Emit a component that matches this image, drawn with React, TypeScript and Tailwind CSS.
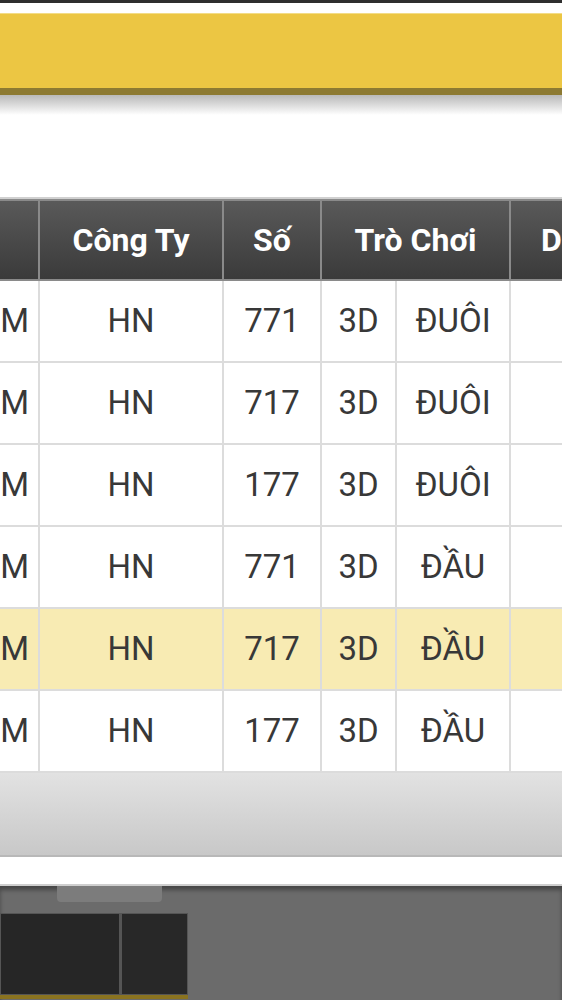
import React from 'react'

const rows = [
  { so: '771', kieu: 'ĐUÔI', hl: false },
  { so: '717', kieu: 'ĐUÔI', hl: false },
  { so: '177', kieu: 'ĐUÔI', hl: false },
  { so: '771', kieu: 'ĐẦU', hl: false },
  { so: '717', kieu: 'ĐẦU', hl: true },
  { so: '177', kieu: 'ĐẦU', hl: false },
]

const bodyCell = 'border-2 border-[#dcdcdc] text-center align-middle'
const headCell = 'border-2 border-[#8a8a8a] font-bold'

export default function App() {
  return (
    <div
      className="relative h-[1000px] w-[562px] overflow-hidden bg-white"
      style={{ fontFamily: 'Roboto, "Noto Sans", sans-serif' }}
    >
      {/* top strip */}
      <div className="h-[3px] bg-[#2f2f2f]" />
      <div className="h-[10px] bg-white" />
      <div className="h-[75px] border-t border-[#f3dc86] bg-[#ecc643]" />
      <div className="h-[7px] bg-[#8d7a32]" />
      <div className="h-[20px] bg-gradient-to-b from-[#b9b9b9] to-white" />
      <div className="h-[84px] border-b-2 border-[#d0d0d0] bg-white" />

      {/* table */}
      <div className="h-[574px] overflow-hidden">
        <table className="ml-[-82px] w-[721px] table-fixed border-collapse">
          <colgroup>
            <col className="w-[120px]" />
            <col className="w-[184px]" />
            <col className="w-[98px]" />
            <col className="w-[75px]" />
            <col className="w-[114px]" />
            <col className="w-[130px]" />
          </colgroup>
          <thead>
            <tr className="h-[80px] bg-gradient-to-b from-[#5a5a5a] to-[#3a3a3a] text-[32px] text-white">
              <th className={`${headCell} pr-[48px] text-right`}>Giờ</th>
              <th className={headCell}>Công Ty</th>
              <th className={headCell}>Số</th>
              <th colSpan={2} className={headCell}>
                Trò Chơi
              </th>
              <th className={`${headCell} pl-[30px] text-left`}>Dự</th>
            </tr>
          </thead>
          <tbody>
            {rows.map((r, i) => (
              <tr
                key={i}
                className={`h-[82px] text-[33px] text-[#383838] ${r.hl ? 'bg-[#f8ebb3]' : 'bg-white'}`}
              >
                <td className="border-2 border-[#dcdcdc] pr-[9px] text-right align-middle">PM</td>
                <td className={bodyCell}>HN</td>
                <td className={bodyCell}>{r.so}</td>
                <td className={bodyCell}>3D</td>
                <td className={bodyCell}>{r.kieu}</td>
                <td className={bodyCell} />
              </tr>
            ))}
          </tbody>
        </table>
      </div>

      {/* bottom grey panel */}
      <div className="h-[84px] border-b-2 border-[#b8b8b8] bg-gradient-to-b from-[#e2e2e2] to-[#c8c8c8]" />
      <div className="h-[29px] border-b-2 border-[#cfcfcf] bg-white" />

      {/* dark footer */}
      <div className="relative h-[200px] bg-[#6b6b6b] shadow-[inset_0_4px_4px_rgba(0,0,0,0.35)]">
        <div className="ml-[57px] h-[16px] w-[105px] rounded-b-sm bg-[#7c7c7c]" />
        <div className="mt-[11px] flex h-[82px] w-[188px] gap-[3px] border border-[#555] bg-[#555]">
          <div className="w-[118px] bg-[#262626]" />
          <div className="flex-1 bg-[#282828]" />
        </div>
        <div className="h-[4px] w-[188px] bg-[#8a7320]" />
      </div>
    </div>
  )
}
